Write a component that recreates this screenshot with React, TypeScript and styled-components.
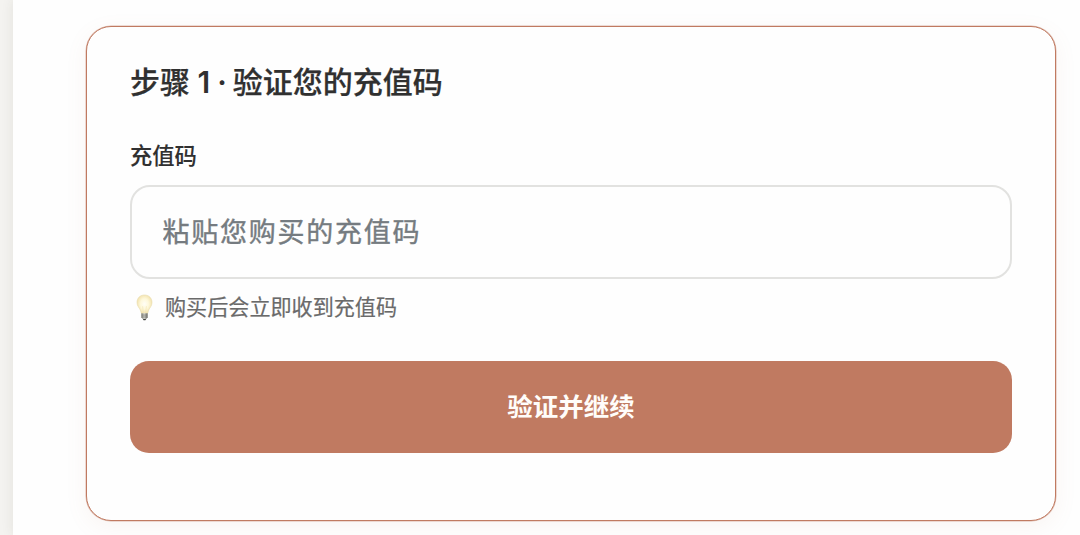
import React, { useState } from 'react';
import styled, { createGlobalStyle } from 'styled-components';

const GlobalStyle = createGlobalStyle`
  * {
    box-sizing: border-box;
  }

  body {
    margin: 0;
    background: #f4f3f0;
    font-family: Inter, 'Noto Sans CJK SC', sans-serif;
    color: #303030;
  }
`;

const Page = styled.main`
  height: 535px;
  padding-left: 13px;
  overflow: hidden;
`;

const Panel = styled.div`
  height: 100%;
  padding: 26px 24px 0 73px;
  background: #fefefe;
  box-shadow: 0 0 12px rgba(60, 50, 30, 0.09);
`;

const Card = styled.section`
  height: 495px;
  padding: 32px 43px 0;
  border: 1px solid #c07a61;
  border-radius: 25px;
  background: #fefefe;
  box-shadow:
    0 0 0 0.5px rgba(192, 122, 97, 0.5),
    0 6px 22px rgba(192, 122, 97, 0.08);
`;

const Title = styled.h2`
  margin: 0 0 34px;
  font-size: 30px;
  font-weight: 600;
  line-height: 46px;
  white-space: nowrap;
`;

const CjkText = styled.span`
  font-weight: 500;
  -webkit-text-stroke: 0.25px currentColor;
`;

const Separator = styled.span`
  margin: 0 6px 0 7px;
`;

const Label = styled.label`
  display: block;
  margin: 0 0 12px;
  font-size: 22.3px;
  font-weight: 500;
  line-height: 34px;
  -webkit-text-stroke: 0.1px currentColor;
`;

const Input = styled.input`
  display: block;
  width: 100%;
  height: 94px;
  padding: 0 30.5px;
  border: 2px solid #e2e2e0;
  border-radius: 20px;
  outline: none;
  background: #fefefe;
  font: inherit;
  font-size: 27px;
  letter-spacing: 1.75px;

  &::placeholder {
    color: #757b80;
    opacity: 1;
    -webkit-text-stroke: 0.4px currentColor;
  }
`;

const Hint = styled.p`
  display: flex;
  align-items: center;
  margin: 12px 0 36px 6px;
  font-size: 21.1px;
  line-height: 34px;
  color: #6a6a6a;
  -webkit-text-stroke: 0.2px currentColor;
`;

const Bulb = styled.svg`
  width: 17px;
  height: 27px;
  margin: -2px 12px 0 0;
`;

const Button = styled.button`
  display: block;
  width: 100%;
  height: 92px;
  padding: 0 0 6px;
  border: 0;
  border-radius: 19px;
  background: #c07a61;
  color: #fffdfa;
  font: inherit;
  font-size: 25.5px;
  font-weight: 700;
`;

function BulbIcon() {
  return (
    <Bulb viewBox="0 0 17 27" aria-hidden="true">
      <defs>
        <radialGradient id="glow" cx="50%" cy="48%" r="55%">
          <stop offset="0" stopColor="#fffef6" />
          <stop offset="0.5" stopColor="#fef8da" />
          <stop offset="1" stopColor="#f1dfa6" />
        </radialGradient>
        <linearGradient id="base">
          <stop offset="0" stopColor="#77776f" />
          <stop offset="0.45" stopColor="#d5d5ce" />
          <stop offset="1" stopColor="#666660" />
        </linearGradient>
      </defs>
      <path
        d="M8.5 1C4 1 1 4.2 1 8.4c0 3.6 2.3 5.3 3.3 7.6.6 1.4.7 2.8 1.2 3.6h6c.5-.8.6-2.2 1.2-3.6 1-2.3 3.3-4 3.3-7.6C16 4.2 13 1 8.5 1Z"
        fill="url(#glow)"
        stroke="#e8dcae"
        strokeWidth="0.6"
      />
      <path d="M6.6 12.2 7.4 19M10.4 12.2 9.6 19" stroke="#f1e4b4" strokeWidth="0.6" />
      <path d="M5.4 19.3h6.2v4.3l-1.4 1.5H6.8l-1.4-1.5Z" fill="url(#base)" />
      <path d="M5.4 21.1h6.2M5.5 23h6" stroke="#77776f" strokeWidth="0.6" />
      <path d="M6.8 25h3.4l-.8 1.3H7.6Z" fill="#41413e" />
    </Bulb>
  );
}

export default function App() {
  const [code, setCode] = useState('');

  return (
    <>
      <GlobalStyle />
      <Page>
        <Panel>
          <Card>
            <Title>
              <CjkText>步骤</CjkText> 1<Separator>·</Separator>
              <CjkText>验证您的充值码</CjkText>
            </Title>
            <Label htmlFor="code">充值码</Label>
            <Input
              id="code"
              value={code}
              placeholder="粘贴您购买的充值码"
              onChange={(e) => setCode(e.target.value)}
            />
            <Hint>
              <BulbIcon />
              购买后会立即收到充值码
            </Hint>
            <Button type="button">验证并继续</Button>
          </Card>
        </Panel>
      </Page>
    </>
  );
}
